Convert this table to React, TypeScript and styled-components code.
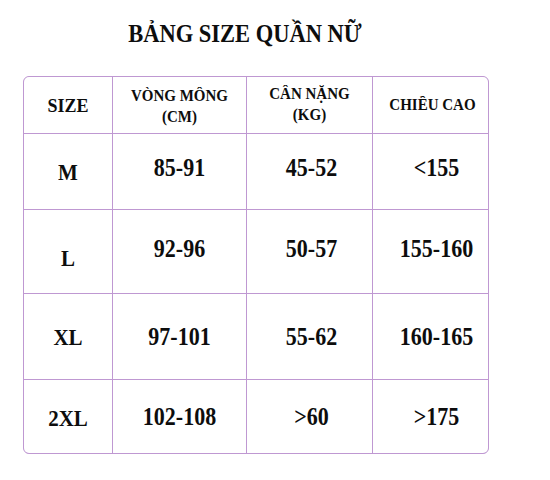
import React from "react";
import styled, { createGlobalStyle } from "styled-components";

const GlobalStyle = createGlobalStyle`
  body {
    margin: 0;
    background: #ffffff;
    font-family: "Liberation Serif", "Times New Roman", serif;
    color: #0d0d0d;
  }
`;

const Page = styled.div`
  width: 550px;
  height: 480px;
  padding: 22px 0 0 23px;
  box-sizing: border-box;
`;

const Title = styled.h1`
  width: 466px;
  margin: 0 0 30px;
  padding-right: 22px;
  box-sizing: border-box;
  text-align: center;
  font-size: 22.5px;
  line-height: 24px;
  font-weight: 700;
  span {
    display: inline-block;
    transform: scaleY(1.1);
  }
`;

const Table = styled.div`
  display: grid;
  grid-template-columns: 88px 133px 125px 115px;
  grid-template-rows: 56px 75px 83px 85px 73px;
  gap: 1px;
  width: 466px;
  box-sizing: border-box;
  background: #bf98d2;
  border: 1px solid #bf98d2;
  border-radius: 6px;
  overflow: hidden;
`;

const Cell = styled.div<{ $head?: boolean; $up?: number; $down?: number; $left?: number }>`
  display: flex;
  align-items: center;
  justify-content: center;
  flex-direction: column;
  background: #ffffff;
  text-align: center;
  font-weight: 700;
  font-size: ${(p) => (p.$head ? "15px" : "22px")};
  line-height: ${(p) => (p.$head ? "21px" : "24px")};
  padding-bottom: ${(p) => (p.$up ? p.$up * 2 : 0)}px;
  padding-top: ${(p) => (p.$down ? p.$down * 2 : 0)}px;
  padding-left: ${(p) => p.$left || 0}px;
  box-sizing: border-box;
`;

// the source picture is a little stretched upward, so glyphs get a small scaleY
const Text = styled.span<{ $size?: number }>`
  display: inline-block;
  transform: scaleY(1.1);
  font-size: ${(p) => (p.$size ? p.$size + "px" : "inherit")};
`;

const headers = [
  { text: ["SIZE"], size: 18 },
  { text: ["VÒNG MÔNG", "(CM)"], down: 2 },
  { text: ["CÂN NẶNG", "(KG)"] },
  { text: ["CHIỀU CAO"], left: 4 },
];

const rows = [
  { size: "M", values: ["85-91", "45-52", "<155"], up: 4, sizeShift: 0 },
  { size: "L", values: ["92-96", "50-57", "155-160"], up: 3, sizeShift: 6 },
  { size: "XL", values: ["97-101", "55-62", "160-165"], up: 0, sizeShift: 0 },
  { size: "2XL", values: ["102-108", ">60", ">175"], up: 0, sizeShift: 1 },
];

export default function App() {
  return (
    <>
      <GlobalStyle />
      <Page>
        <Title>
          <span>BẢNG SIZE QUẦN NỮ</span>
        </Title>
        <Table>
          {headers.map((h, i) => (
            <Cell key={"h" + i} $head $down={h.down} $left={h.left}>
              {h.text.map((t) => (
                <Text key={t} $size={h.size}>
                  {t}
                </Text>
              ))}
            </Cell>
          ))}
          {rows.map((r) => (
            <React.Fragment key={r.size}>
              <Cell $down={r.sizeShift}>
                <Text $size={21}>{r.size}</Text>
              </Cell>
              {r.values.map((v, i) => (
                <Cell key={v} $up={r.up} $left={i === 2 ? 12 : i === 1 ? 4 : 0}>
                  <Text>{v}</Text>
                </Cell>
              ))}
            </React.Fragment>
          ))}
        </Table>
      </Page>
    </>
  );
}
